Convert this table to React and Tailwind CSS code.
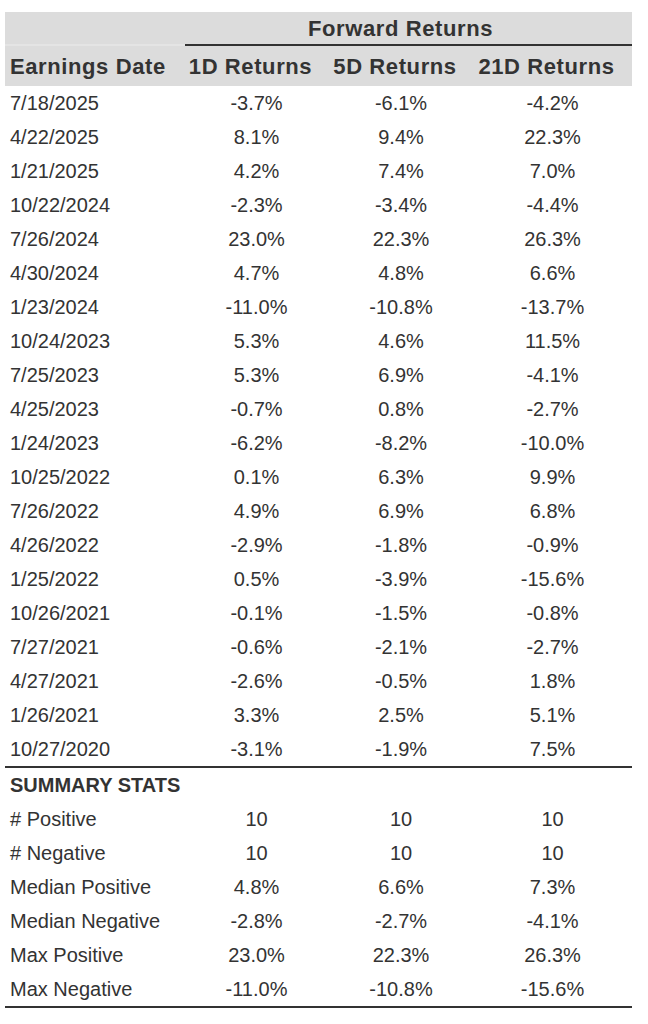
const rows = [
  ["7/18/2025", "-3.7%", "-6.1%", "-4.2%"],
  ["4/22/2025", "8.1%", "9.4%", "22.3%"],
  ["1/21/2025", "4.2%", "7.4%", "7.0%"],
  ["10/22/2024", "-2.3%", "-3.4%", "-4.4%"],
  ["7/26/2024", "23.0%", "22.3%", "26.3%"],
  ["4/30/2024", "4.7%", "4.8%", "6.6%"],
  ["1/23/2024", "-11.0%", "-10.8%", "-13.7%"],
  ["10/24/2023", "5.3%", "4.6%", "11.5%"],
  ["7/25/2023", "5.3%", "6.9%", "-4.1%"],
  ["4/25/2023", "-0.7%", "0.8%", "-2.7%"],
  ["1/24/2023", "-6.2%", "-8.2%", "-10.0%"],
  ["10/25/2022", "0.1%", "6.3%", "9.9%"],
  ["7/26/2022", "4.9%", "6.9%", "6.8%"],
  ["4/26/2022", "-2.9%", "-1.8%", "-0.9%"],
  ["1/25/2022", "0.5%", "-3.9%", "-15.6%"],
  ["10/26/2021", "-0.1%", "-1.5%", "-0.8%"],
  ["7/27/2021", "-0.6%", "-2.1%", "-2.7%"],
  ["4/27/2021", "-2.6%", "-0.5%", "1.8%"],
  ["1/26/2021", "3.3%", "2.5%", "5.1%"],
  ["10/27/2020", "-3.1%", "-1.9%", "7.5%"],
];

const stats = [
  ["# Positive", "10", "10", "10"],
  ["# Negative", "10", "10", "10"],
  ["Median Positive", "4.8%", "6.6%", "7.3%"],
  ["Median Negative", "-2.8%", "-2.7%", "-4.1%"],
  ["Max Positive", "23.0%", "22.3%", "26.3%"],
  ["Max Negative", "-11.0%", "-10.8%", "-15.6%"],
];

const cols = "grid grid-cols-[180px_131px_158px_145px_13px]";

function Row({ cells }) {
  return (
    <div className={`${cols} h-[34px] items-center text-[20px]`}>
      <div className="pl-[5px] whitespace-nowrap">{cells[0]}</div>
      <div className="pl-[12px] text-center">{cells[1]}</div>
      <div className="pl-[12px] text-center">{cells[2]}</div>
      <div className="pl-[12px] text-center">{cells[3]}</div>
      <div />
    </div>
  );
}

export default function App() {
  return (
    <div
      className="w-[648px] h-[1024px] bg-white pt-[12px] pl-[5px] text-[#333333]"
      style={{ fontFamily: '"Liberation Sans", Arial, sans-serif' }}
    >
      <div className="w-[627px]">
        {/* Header */}
        <div className="bg-[#dcdcdc] font-bold text-[22px] tracking-[0.6px]">
          <div className="grid grid-cols-[180px_447px]">
            <div className="h-[34px] border-b-2 border-[#e4e4e4]" />
            <div className="h-[34px] border-b-2 border-[#333333] flex items-center justify-center pr-[16px]">
              Forward Returns
            </div>
          </div>
          <div className={`${cols} h-[40px] items-center`}>
            <div className="pl-[5px] whitespace-nowrap">Earnings Date</div>
            <div className="text-center whitespace-nowrap">1D Returns</div>
            <div className="text-center whitespace-nowrap">5D Returns</div>
            <div className="text-center whitespace-nowrap">21D Returns</div>
            <div />
          </div>
        </div>

        {/* Data rows */}
        <div className="border-b-2 border-[#333333]">
          {rows.map((r) => (
            <Row key={r[0]} cells={r} />
          ))}
        </div>

        {/* Summary */}
        <div className="border-b-2 border-[#333333]">
          <div className="h-[34px] flex items-center pl-[5px] font-bold text-[20px]">
            SUMMARY STATS
          </div>
          {stats.map((r) => (
            <Row key={r[0]} cells={r} />
          ))}
        </div>
      </div>
    </div>
  );
}
